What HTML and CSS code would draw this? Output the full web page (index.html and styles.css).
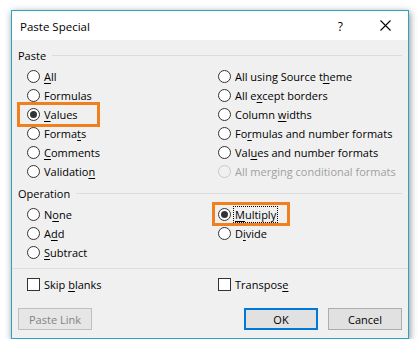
FILE: index.html
```html
<!DOCTYPE html>
<html lang="en">
<head>
  <meta charset="UTF-8">
  <title>Paste Special</title>
  <link rel="stylesheet" href="styles.css">
</head>
<body>
  <div class="dialog">
    <div class="titlebar">
      <span class="title">Paste Special</span>
      <span class="help">?</span>
      <span class="close">
        <svg width="11" height="11" viewBox="0 0 11 11"><path d="M0.5 0.5 L10.5 10.5 M10.5 0.5 L0.5 10.5" stroke="#000" stroke-width="1.1" fill="none"/></svg>
      </span>
    </div>

    <div class="content">
      <div class="group-label"><span>Paste</span></div>
      <div class="options">
        <div class="opt"><span class="radio"></span><span><u>A</u>ll</span></div>
        <div class="opt"><span class="radio"></span><span>All using Source t<u>h</u>eme</span></div>
        <div class="opt"><span class="radio"></span><span><u>F</u>ormulas</span></div>
        <div class="opt"><span class="radio"></span><span>All e<u>x</u>cept borders</span></div>
        <div class="opt marked"><span class="radio checked"></span><span><u>V</u>alues</span></div>
        <div class="opt"><span class="radio"></span><span>Column <u>w</u>idths</span></div>
        <div class="opt"><span class="radio"></span><span>Forma<u>t</u>s</span></div>
        <div class="opt"><span class="radio"></span><span>Fo<u>r</u>mulas and number formats</span></div>
        <div class="opt"><span class="radio"></span><span><u>C</u>omments</span></div>
        <div class="opt"><span class="radio"></span><span>Val<u>u</u>es and number formats</span></div>
        <div class="opt"><span class="radio"></span><span>Validatio<u>n</u></span></div>
        <div class="opt disabled"><span class="radio"></span><span>All merging conditional formats</span></div>
      </div>

      <div class="group-label op"><span>Operation</span></div>
      <div class="options">
        <div class="opt"><span class="radio"></span><span>N<u>o</u>ne</span></div>
        <div class="opt marked right"><span class="radio checked"></span><span class="focus"><u>M</u>ultiply</span></div>
        <div class="opt"><span class="radio"></span><span>A<u>d</u>d</span></div>
        <div class="opt"><span class="radio"></span><span>D<u>i</u>vide</span></div>
        <div class="opt"><span class="radio"></span><span><u>S</u>ubtract</span></div>
      </div>

      <div class="separator"></div>

      <div class="options">
        <div class="opt"><span class="check"></span><span>Skip <u>b</u>lanks</span></div>
        <div class="opt"><span class="check"></span><span>Transpos<u>e</u></span></div>
      </div>

      <div class="buttons">
        <button class="btn" disabled>Paste Link</button>
        <span class="spacer"></span>
        <button class="btn default">OK</button>
        <button class="btn">Cancel</button>
      </div>
    </div>
  </div>
</body>
</html>
```

FILE: styles.css
```css
body {
  margin: 0;
  background: #ffffff;
  font-family: "Open Sans", "Noto Sans", sans-serif;
  font-size: 11px;
  color: #000;
}

.dialog {
  margin: 10px 0 0 11px;
  width: 398px;
  height: 329px;
  box-sizing: border-box;
  border: 1px solid #2aa3c8;
  background: #f0f0f0;
  box-shadow: 1px 2px 7px rgba(0, 0, 0, 0.45);
}

.titlebar {
  height: 29px;
  background: #ffffff;
  display: flex;
  align-items: center;
  padding-left: 8px;
}

.title {
  flex: 1;
  font-size: 11.5px;
  padding-top: 1px;
}

.help {
  font-size: 12px;
  margin-right: 37px;
  padding-top: 1px;
}

.close {
  display: flex;
  margin-right: 17px;
}

.content {
  padding: 6px 6px 0 6px;
}

.group-label {
  display: flex;
  align-items: center;
  height: 19px;
  gap: 6px;
}

.group-label::after {
  content: "";
  flex: 1;
  height: 1px;
  background: #dcdcdc;
}

.group-label.op {
  margin-top: 3px;
}

.options {
  display: grid;
  grid-template-columns: 191px 1fr;
  padding-left: 9px;
  margin-top: 2px;
}

.opt {
  position: relative;
  display: flex;
  align-items: center;
  height: 19px;
  white-space: nowrap;
}

.opt u {
  text-decoration-thickness: 1px;
  text-underline-offset: 2px;
}

.radio {
  width: 13px;
  height: 13px;
  box-sizing: border-box;
  border: 1px solid #333;
  border-radius: 50%;
  background: #fff;
  margin-right: 4px;
  display: flex;
  align-items: center;
  justify-content: center;
}

.radio.checked::after {
  content: "";
  width: 7px;
  height: 7px;
  border-radius: 50%;
  background: #333;
}

.disabled {
  color: #a0a0a0;
}

.disabled .radio {
  border-color: #c8c8c8;
  background: #f0f0f0;
}

.check {
  width: 13px;
  height: 13px;
  box-sizing: border-box;
  border: 1px solid #333;
  background: #fff;
  margin-right: 4px;
}

.focus {
  outline: 1px dotted #000;
  outline-offset: 0;
  padding: 0 1px;
  margin-left: -1px;
}

/* orange annotation boxes */
.marked::before {
  content: "";
  position: absolute;
  left: -10px;
  top: -3px;
  width: 77px;
  height: 19px;
  border: 3px solid #f0801e;
}

.marked.right::before {
  left: -6px;
  top: -3px;
  width: 72px;
  height: 18px;
}

.separator {
  height: 1px;
  background: #dcdcdc;
  margin: 6px -6px 6px -6px;
}

.buttons {
  display: flex;
  gap: 10px;
  margin-top: 14px;
}

.spacer {
  flex: 1;
}

.btn {
  width: 74px;
  height: 22px;
  font-family: inherit;
  font-size: 11px;
  background: #e1e1e1;
  border: 1px solid #adadad;
  padding: 0;
  color: #000;
}

.btn:disabled {
  color: #838383;
  border-color: #bfbfbf;
  background: #e6e6e6;
}

.btn.default {
  border: 2px solid #0078d7;
}
```
